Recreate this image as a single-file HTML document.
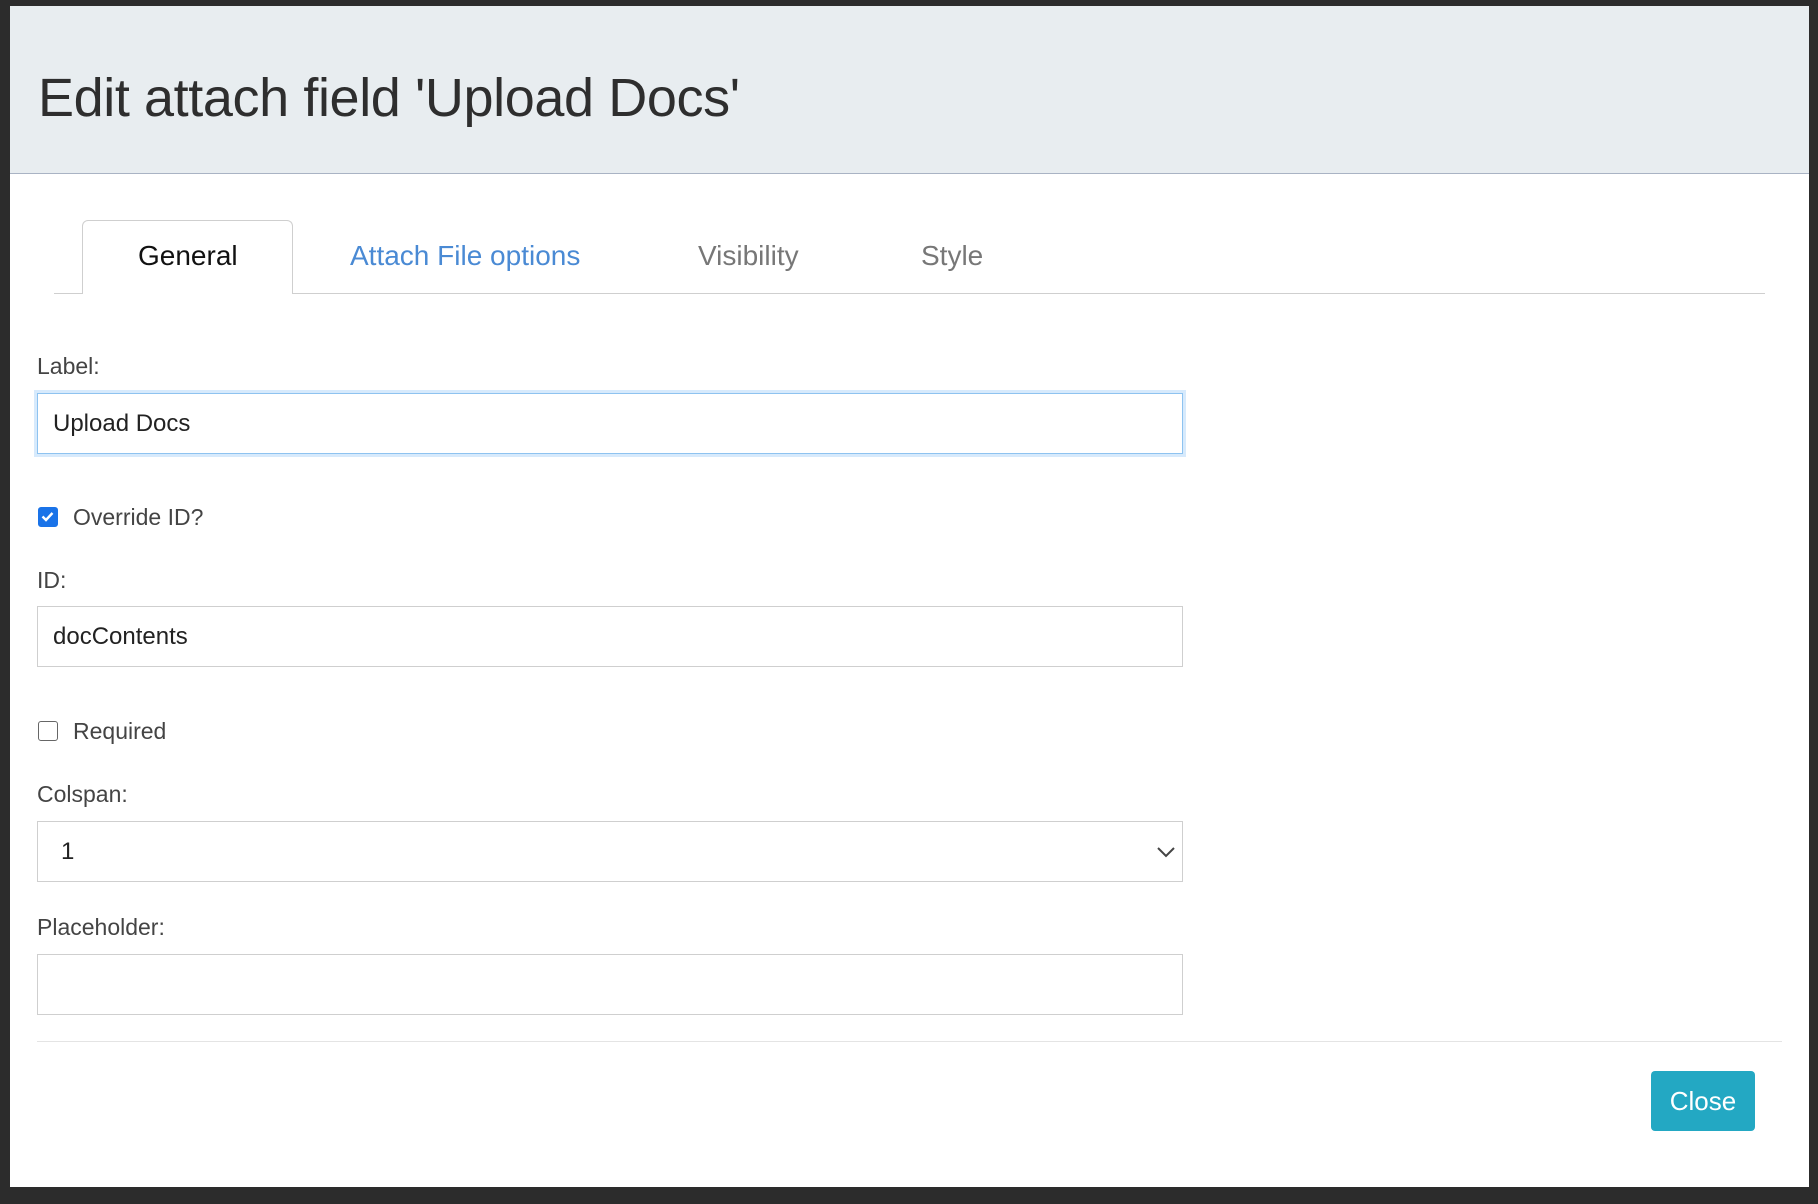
<!DOCTYPE html>
<html><head><meta charset="utf-8"><style>
*{box-sizing:border-box;margin:0;padding:0}
body{width:1818px;height:1204px;background:#2c2c2c;font-family:"Liberation Sans",sans-serif;position:relative;overflow:hidden}
.modal{position:absolute;left:10px;top:6px;width:1799px;height:1181px;background:#fff}
.hdr{position:absolute;left:0;top:0;width:100%;height:168px;background:#e8edf0;border-bottom:1px solid #a9b3c4}
.hdr h1{position:absolute;left:28px;top:61px;font-size:54px;font-weight:normal;color:#2e2e2e;letter-spacing:-0.4px}
.tabline{position:absolute;left:44px;top:287px;width:1711px;height:1px;background:#cfcfcf}
.tab{position:absolute;top:214px;left:72px;width:211px;height:74px;background:#fff;border:1px solid #cfcfcf;border-bottom:none;border-radius:6px 6px 0 0}
.t{position:absolute;top:234px;font-size:28px;color:#777}
.lbl{position:absolute;left:27px;font-size:23px;color:#444}
.inp{position:absolute;left:27px;width:1146px;height:61px;border:1px solid #cfcfcf;font-size:24px;color:#222;padding:16px 15px}
.cb{position:absolute;left:28px;width:20px;height:20px;border:1.5px solid #666;border-radius:3px;background:#fff}
</style></head><body>
<div class="modal">
<div class="hdr"><h1>Edit attach field 'Upload Docs'</h1></div>
<div class="tabline"></div>
<div class="tab"></div>
<div class="t" style="left:128px;color:#111">General</div>
<div class="t" style="left:340px;color:#4a8ad4">Attach File options</div>
<div class="t" style="left:688px">Visibility</div>
<div class="t" style="left:911px">Style</div>

<div class="lbl" style="top:347px">Label:</div>
<div class="inp" style="top:387px;border-color:#8ec3f0;box-shadow:0 0 0 3px rgba(140,195,245,.35)">Upload Docs</div>

<div class="cb" style="top:501px;background:#1a73e8;border-color:#1a73e8"><svg width="17" height="17" viewBox="0 0 17 17" style="position:absolute;left:0;top:0"><path d="M3.5 8.5l3.5 3.5 6.5-7" stroke="#fff" stroke-width="2.4" fill="none"/></svg></div>
<div class="lbl" style="top:498px;left:63px">Override ID?</div>

<div class="lbl" style="top:561px">ID:</div>
<div class="inp" style="top:600px">docContents</div>

<div class="cb" style="top:715px"></div>
<div class="lbl" style="top:712px;left:63px">Required</div>

<div class="lbl" style="top:775px">Colspan:</div>
<div class="inp" style="top:815px;padding-left:23px">1<svg width="20" height="12" viewBox="0 0 20 12" style="position:absolute;right:6px;top:24px"><path d="M2 2l8 8 8-8" stroke="#444" stroke-width="2" fill="none"/></svg></div>

<div class="lbl" style="top:908px">Placeholder:</div>
<div class="inp" style="top:948px"></div>

<div style="position:absolute;left:27px;top:1035px;width:1745px;height:1px;background:#e4e4e4"></div>
<div style="position:absolute;left:1641px;top:1065px;width:104px;height:60px;background:#23a8c3;border-radius:4px;color:#fff;font-size:26px;text-align:center;line-height:60px">Close</div>
</div>
</body></html>
